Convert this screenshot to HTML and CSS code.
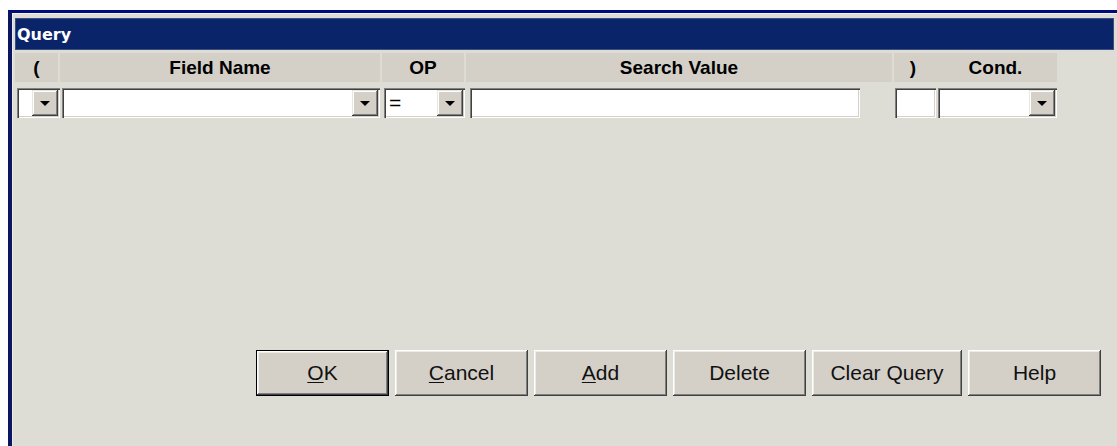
FILE: index.html
```html
<!DOCTYPE html>
<html lang="en">
<head>
<meta charset="utf-8">
<title>Query</title>
<link rel="stylesheet" href="styles.css">
</head>
<body>
<div class="window">
  <div class="titlebar">Query</div>

  <div class="head-row">
    <div class="head-cell">(</div>
    <div class="head-cell">Field Name</div>
    <div class="head-cell">OP</div>
    <div class="head-cell">Search Value</div>
    <div class="head-cell head-cell--joined">)</div>
    <div class="head-cell">Cond.</div>
  </div>

  <div class="field-row">
    <div class="field combo combo--paren">
      <span class="combo-text"></span>
      <span class="drop-btn"><span class="arrow"></span></span>
    </div>
    <div class="field combo combo--name">
      <span class="combo-text"></span>
      <span class="drop-btn"><span class="arrow"></span></span>
    </div>
    <div class="field combo combo--op">
      <span class="combo-text">=</span>
      <span class="drop-btn"><span class="arrow"></span></span>
    </div>
    <div class="field text-box text-box--value"></div>
    <div class="field text-box text-box--close"></div>
    <div class="field combo combo--cond">
      <span class="combo-text"></span>
      <span class="drop-btn"><span class="arrow"></span></span>
    </div>
  </div>

  <div class="button-row">
    <button class="btn btn--default"><u>O</u>K</button>
    <button class="btn"><u>C</u>ancel</button>
    <button class="btn"><u>A</u>dd</button>
    <button class="btn">Delete</button>
    <button class="btn btn--wide">Clear Query</button>
    <button class="btn">Help</button>
  </div>
</div>
</body>
</html>
```

FILE: styles.css
```css
* {
  box-sizing: border-box;
}

html,
body {
  margin: 0;
}

body {
  width: 1117px;
  height: 446px;
  overflow: hidden;
  background: #ffffff;
  font-family: "Liberation Sans", Arial, sans-serif;
  color: #000;
}

/* dialog frame */
.window {
  margin: 10px 0 0 8px;
  width: 1109px;
  height: 436px;
  background: #dddcd5;
  border-top: 3px solid #000a7a;
  border-left: 4px solid #0a1662;
  padding: 5px 3px 0 3px;
  box-shadow: inset 0 1px 0 #f2f2ee, inset 1px 0 0 #ecebe6;
}

.titlebar {
  height: 32px;
  background: #0a246a;
  border: 1px solid #3b4d82;
  color: #ffffff;
  font: bold 16px "DejaVu Sans", Verdana, sans-serif;
  display: flex;
  align-items: center;
  padding-left: 1px;
}

/* column headers */
.head-row {
  margin-top: 3px;
  display: grid;
  grid-template-columns: 43px 320px 82px 426px 38px 123px;
  column-gap: 2px;
  height: 29px;
}

.head-cell {
  background: #d4d0c8;
  font-weight: bold;
  font-size: 19px;
  display: flex;
  align-items: center;
  justify-content: center;
}

.head-cell--joined {
  box-shadow: 2px 0 0 #d4d0c8;
}

/* input row */
.field-row {
  margin-top: 6px;
  height: 30px;
  display: flex;
  padding-left: 2px;
}

.field {
  height: 30px;
  background: #ffffff;
  box-shadow:
    inset 1px 1px #808080,
    inset 2px 2px #404040,
    inset -1px -1px #ffffff,
    inset -2px -2px #d4d0c8;
  padding: 2px;
}

.combo {
  display: flex;
  align-items: stretch;
}

.combo-text {
  flex: 1;
  font-size: 21px;
  line-height: 26px;
  padding-left: 3px;
}

.drop-btn {
  width: 26px;
  background: #d4d0c8;
  box-shadow:
    inset -1px -1px #404040,
    inset 1px 1px #e8e6e0,
    inset -2px -2px #808080,
    inset 2px 2px #ffffff;
  display: flex;
  align-items: center;
  justify-content: center;
}

.arrow {
  width: 0;
  height: 0;
  border-left: 5px solid transparent;
  border-right: 5px solid transparent;
  border-top: 5px solid #000;
  margin-top: 1px;
}

.combo--paren {
  width: 43px;
}

.combo--name {
  width: 318px;
  margin-left: 2px;
}

.combo--op {
  width: 81px;
  margin-left: 4px;
}

.text-box--value {
  width: 390px;
  margin-left: 5px;
}

.text-box--close {
  width: 41px;
  margin-left: 35px;
}

.combo--cond {
  width: 119px;
  margin-left: 2px;
}

/* command buttons */
.button-row {
  margin-top: 232px;
  display: flex;
  justify-content: flex-end;
  gap: 6px;
  padding-right: 13px;
}

.btn {
  width: 133px;
  height: 46px;
  border: none;
  background: #d4d0c8;
  font-family: "Liberation Sans", Arial, sans-serif;
  font-size: 21px;
  color: #111;
  padding: 0;
  box-shadow:
    inset -1px -1px #404040,
    inset 1px 1px #ffffff,
    inset -2px -2px #808080,
    inset 2px 2px #ecebe6;
}

.btn--wide {
  width: 150px;
}

.btn--default {
  border: 1px solid #000;
}

.btn u {
  text-decoration-thickness: 1px;
  text-underline-offset: 2px;
}
```
